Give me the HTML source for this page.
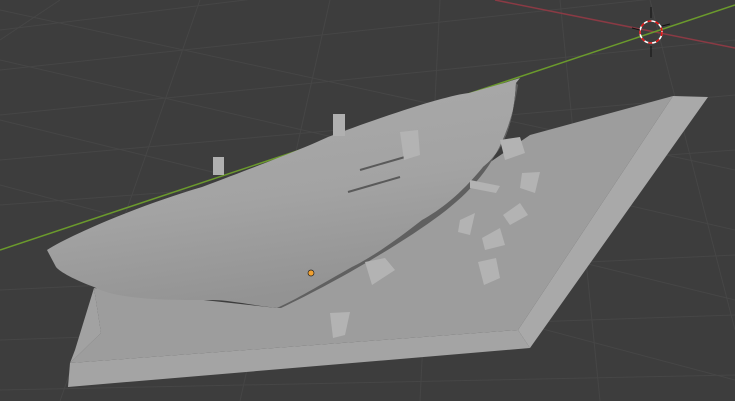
<!DOCTYPE html>
<html><head><style>
html,body{margin:0;padding:0;background:#3d3d3d;overflow:hidden}
svg{display:block}
</style></head><body>
<svg width="735" height="401" viewBox="0 0 735 401" xmlns="http://www.w3.org/2000/svg">
<defs>
<linearGradient id="hg" x1="0" y1="0" x2="0.3" y2="1">
<stop offset="0" stop-color="#ababab"/>
<stop offset="0.6" stop-color="#a3a3a3"/>
<stop offset="1" stop-color="#939393"/>
</linearGradient>
</defs>
<rect width="735" height="401" fill="#3d3d3d"/>
<g stroke="#464646" stroke-width="1" fill="none">
<line x1="0" y1="30" x2="735" y2="-60"/>
<line x1="0" y1="70" x2="735" y2="-10"/>
<line x1="0" y1="115" x2="735" y2="40"/>
<line x1="0" y1="160" x2="735" y2="95"/>
<line x1="0" y1="205" x2="735" y2="150"/>
<line x1="0" y1="290" x2="735" y2="255"/>
<line x1="0" y1="340" x2="735" y2="315"/>
<line x1="0" y1="390" x2="735" y2="375"/>
<line x1="0" y1="10" x2="735" y2="170"/>
<line x1="0" y1="60" x2="735" y2="230"/>
<line x1="0" y1="120" x2="735" y2="300"/>
<line x1="0" y1="185" x2="735" y2="380"/>
<line x1="60" y1="0" x2="0" y2="40"/>
<line x1="200" y1="0" x2="60" y2="401"/>
<line x1="330" y1="0" x2="240" y2="401"/>
<line x1="440" y1="0" x2="420" y2="401"/>
<line x1="560" y1="0" x2="600" y2="401"/>
<line x1="650" y1="0" x2="735" y2="330"/>
</g>
<line x1="495" y1="0" x2="735" y2="48" stroke="#8a3a44" stroke-width="1.5"/>
<line x1="0" y1="250" x2="735" y2="5" stroke="#6b9a2c" stroke-width="1.5"/>
<!-- base plate -->
<polygon points="673,96 708,97 530,348 518,330" fill="#a9a9a9"/>
<polygon points="70,363 518,330 530,348 68,387" fill="#a4a4a4"/>
<polygon points="94,288 277,308 352,267 483,167 530,135 673,96 518,330 70,363 101,333" fill="#9d9d9d"/>
<polygon points="94,288 101,333 70,363 75,350" fill="#a2a2a2"/>
<!-- hull -->
<path d="M47,250 C70,235 140,205 202,187 C260,165 300,150 328,137 C400,110 450,95 469,93 C490,87 505,83 520,78 L516,83 C514,120 505,150 483,167 C460,195 440,210 422,220 C390,245 370,258 352,267 C320,285 295,300 277,308 C250,305 230,300 211,300 C180,300 160,300 141,298 C120,296 105,293 94,287 C75,280 60,272 56,267 Z" fill="url(#hg)"/>
<path d="M516,83 C514,120 505,150 483,167 C460,195 440,210 422,220 C390,245 370,258 352,267 C320,285 295,300 277,308 L281,308 C330,285 400,245 440,215 C480,185 508,150 518,85 Z" fill="#606060"/>
<g fill="#b0b0b0">
<rect x="333" y="114" width="12" height="22"/>
<rect x="213" y="157" width="11" height="18"/>
</g>
<g stroke="#5a5a5a" stroke-width="2">
<line x1="360" y1="170" x2="405" y2="157"/>
<line x1="348" y1="192" x2="400" y2="177"/>
</g>
<g fill="#b3b3b3">
<polygon points="500,140 520,137 525,153 505,160"/>
<polygon points="522,173 540,172 535,193 520,188"/>
<polygon points="470,180 500,186 496,193 470,188"/>
<polygon points="503,215 520,203 528,215 510,225"/>
<polygon points="460,220 475,213 470,235 458,232"/>
<polygon points="482,238 500,228 505,245 485,250"/>
<polygon points="478,262 496,258 500,278 484,285"/>
<polygon points="365,262 385,258 395,270 372,285"/>
<polygon points="330,313 350,312 345,335 333,338"/>
<polygon points="400,132 418,130 420,155 404,160"/>
</g>
<circle cx="311" cy="273" r="3" fill="#f0a030" stroke="#222" stroke-width="0.7"/>
<!-- 3d cursor -->
<g>
<circle cx="651" cy="32" r="11" fill="none" stroke="#fff" stroke-width="1.6"/>
<circle cx="651" cy="32" r="11" fill="none" stroke="#e01010" stroke-width="1.6" stroke-dasharray="4 4"/>
<line x1="651" y1="7" x2="651" y2="18" stroke="#111" stroke-width="1"/>
<line x1="651" y1="46" x2="651" y2="57" stroke="#111" stroke-width="1"/>
<line x1="632" y1="28" x2="640" y2="30" stroke="#111" stroke-width="1"/>
<line x1="662" y1="26" x2="670" y2="24" stroke="#111" stroke-width="1"/>
</g>
</svg>
</body></html>
